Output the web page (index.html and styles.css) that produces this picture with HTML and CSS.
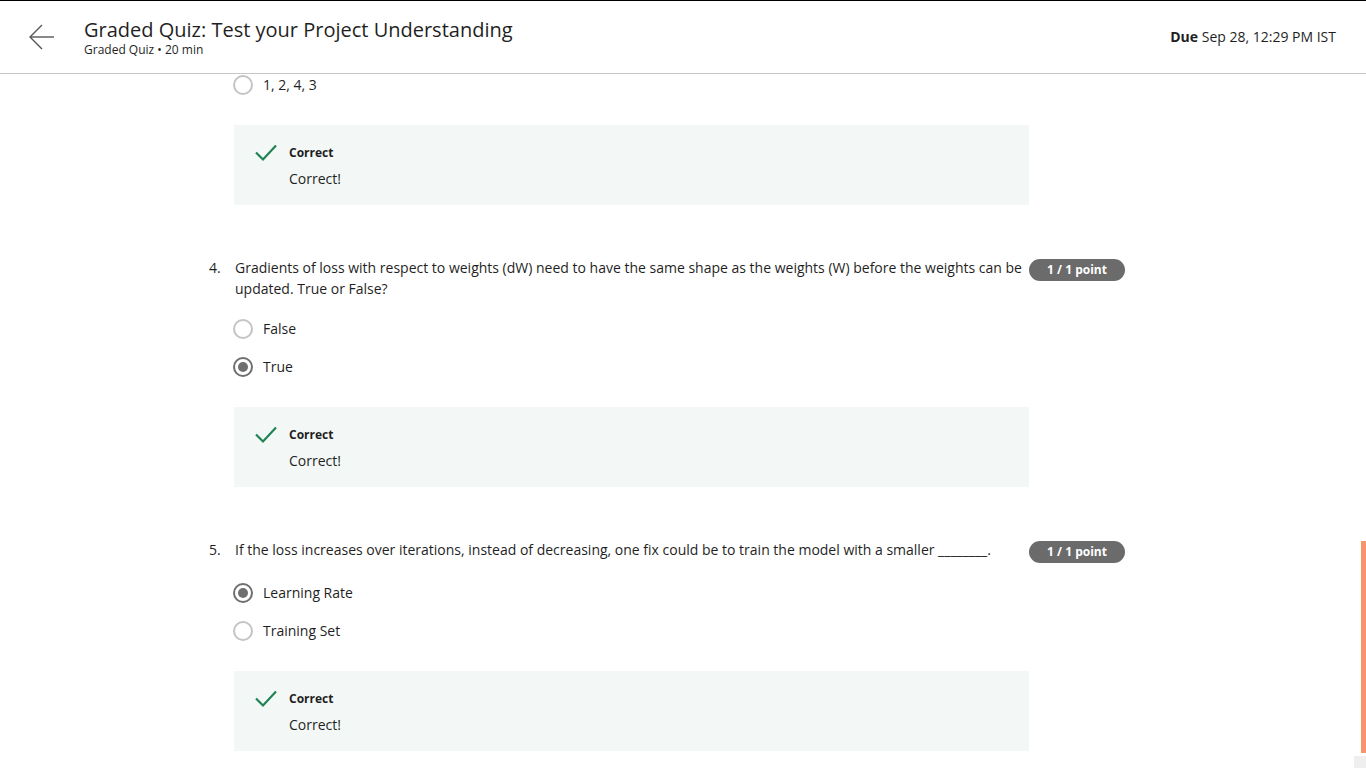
FILE: index.html
```html
<!DOCTYPE html>
<html lang="en">
<head>
<meta charset="utf-8">
<title>Graded Quiz</title>
<link rel="stylesheet" href="styles.css">
</head>
<body>
<header class="topbar">
  <div class="back">
    <svg width="26" height="26" viewBox="0 0 26 26" fill="none" stroke="#555" stroke-width="1.4"><path d="M25 13H1"/><path d="M13 1L1 13l12 12"/></svg>
  </div>
  <div class="titles">
    <h1 class="title">Graded Quiz: Test your Project Understanding</h1>
    <div class="subtitle">Graded Quiz • 20 min</div>
  </div>
  <div class="due"><b>Due</b> Sep 28, 12:29 PM IST</div>
</header>

<main class="content">
  <section class="question tail">
    <div class="options">
      <div class="option"><span class="radio"></span><span>1, 2, 4, 3</span></div>
    </div>
    <div class="feedback">
      <svg class="check" width="22" height="18" viewBox="0 0 22 18" fill="none" stroke="#1f8354" stroke-width="2.2"><path d="M1 8.5l7 7L21 1.5"/></svg>
      <div><div class="fb-title">Correct</div><div class="fb-text">Correct!</div></div>
    </div>
  </section>

  <section class="question">
    <div class="qhead">
      <span class="qnum">4.</span>
      <p class="qtext">Gradients of loss with respect to weights (dW) need to have the same shape as the weights (W) before the weights can be updated. True or False?</p>
      <span class="badge">1 / 1 point</span>
    </div>
    <div class="options">
      <div class="option"><span class="radio"></span><span>False</span></div>
      <div class="option"><span class="radio checked"></span><span>True</span></div>
    </div>
    <div class="feedback">
      <svg class="check" width="22" height="18" viewBox="0 0 22 18" fill="none" stroke="#1f8354" stroke-width="2.2"><path d="M1 8.5l7 7L21 1.5"/></svg>
      <div><div class="fb-title">Correct</div><div class="fb-text">Correct!</div></div>
    </div>
  </section>

  <section class="question">
    <div class="qhead">
      <span class="qnum">5.</span>
      <p class="qtext">If the loss increases over iterations, instead of decreasing, one fix could be to train the model with a smaller ________.</p>
      <span class="badge">1 / 1 point</span>
    </div>
    <div class="options">
      <div class="option"><span class="radio checked"></span><span>Learning Rate</span></div>
      <div class="option"><span class="radio"></span><span>Training Set</span></div>
    </div>
    <div class="feedback">
      <svg class="check" width="22" height="18" viewBox="0 0 22 18" fill="none" stroke="#1f8354" stroke-width="2.2"><path d="M1 8.5l7 7L21 1.5"/></svg>
      <div><div class="fb-title">Correct</div><div class="fb-text">Correct!</div></div>
    </div>
  </section>
</main>

<div class="scroll-thumb"></div>
<div class="scroll-corner"></div>
</body>
</html>
```

FILE: styles.css
```css
* { box-sizing: border-box; }
html, body { margin: 0; padding: 0; }
body {
  font-family: "Open Sans", "Noto Sans", sans-serif;
  color: #1f1f1f;
  background: #fff;
  height: 768px;
  overflow: hidden;
  padding-top: 66px;
}
.topbar {
  position: fixed;
  top: 0; left: 0; right: 0;
  height: 74px;
  background: #fff;
  border-top: 1px solid #000;
  border-bottom: 1px solid #c7c7c7;
  display: flex;
  align-items: center;
  padding: 0 30px 0 29px;
  z-index: 5;
}
.back { width: 26px; height: 26px; margin-right: 29px; margin-top: -1px; display: flex; }
.titles { flex: 1; margin-top: 0; }
.title {
  margin: 0;
  font-size: 20px;
  font-weight: 400;
  line-height: 26px;
  color: #1f1f1f;
}
.subtitle { font-size: 12px; line-height: 16px; color: #1f1f1f; margin-top: -1px; }
.due { font-size: 14px; color: #1f1f1f; margin-top: -1px; }
.due b { font-weight: 700; }

.content { width: 916px; margin-left: 209px; }
.question { padding-bottom: 53px; }
.qhead { display: flex; align-items: flex-start; margin-top: -1px; }
.qnum { width: 26px; font-size: 14px; line-height: 21px; flex: none; }
.qtext {
  margin: 0;
  width: 794px;
  font-size: 14px;
  line-height: 21px;
  flex: none;
}
.badge {
  margin-left: auto;
  margin-top: 2px;
  height: 22px;
  width: 96px;
  border-radius: 11px;
  background: #6b6b6b;
  color: #fff;
  font-size: 12px;
  font-weight: 700;
  line-height: 21px;
  text-align: center;
  flex: none;
}
.options { margin: 11px 0 0 24px; }
.tail .options { margin-top: 0; }
.option {
  height: 38px;
  display: flex;
  align-items: center;
  font-size: 14px;
  color: #1f1f1f;
}
.option span:last-child { margin-top: -1px; }
.radio {
  width: 20px; height: 20px;
  border-radius: 50%;
  border: 2px solid #c4c4c4;
  margin-right: 10px;
  position: relative;
  flex: none;
}
.radio.checked { border-color: #6f6f6f; }
.radio.checked::after {
  content: "";
  position: absolute;
  left: 3px; top: 3px;
  width: 10px; height: 10px;
  border-radius: 50%;
  background: #6f6f6f;
}
.feedback {
  margin: 21px 0 0 25px;
  width: 795px;
  height: 80px;
  background: #f3f8f6;
  display: flex;
  align-items: flex-start;
  padding: 20px 0 0 21px;
}
.check { margin-top: -1px; margin-right: 12px; flex: none; }
.fb-title { font-size: 12px; font-weight: 700; line-height: 16px; }
.fb-text { font-size: 14px; line-height: 20px; margin-top: 8px; }

.scroll-thumb {
  position: fixed;
  right: 0; top: 541px;
  width: 5px; height: 212px;
  background: #f4956b;
}
.scroll-corner {
  position: fixed;
  right: 0; bottom: 0;
  width: 12px; height: 12px;
  background: #efefef;
}
```
